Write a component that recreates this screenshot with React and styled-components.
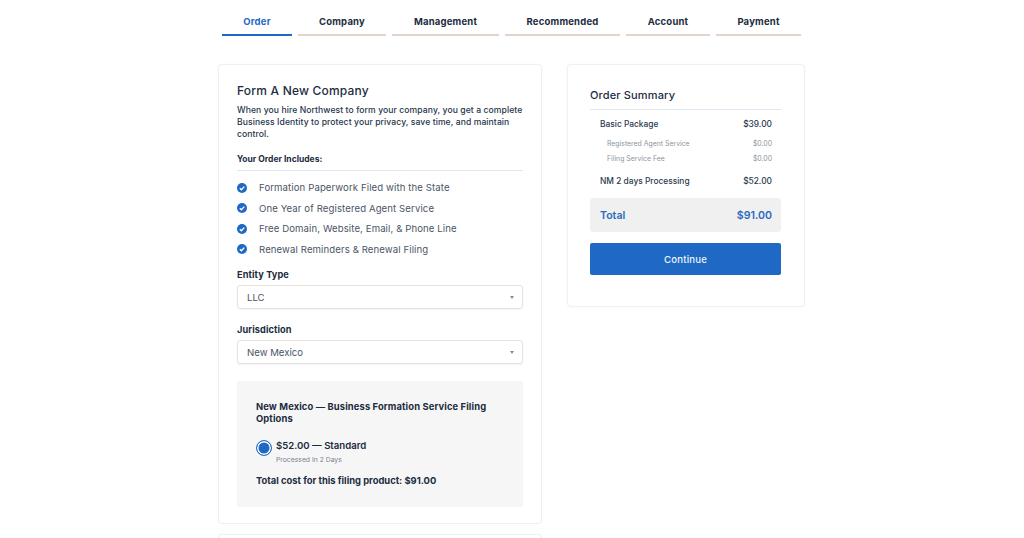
import React from "react";
import styled, { createGlobalStyle } from "styled-components";

const Global = createGlobalStyle`
  html, body {
    margin: 0;
    height: 538px;
    overflow: hidden;
    background: #fff;
    font-family: Inter, "Liberation Sans", sans-serif;
    color: #1c2c40;
  }
`;

const steps = [
  { label: "Order", width: 70, active: true },
  { label: "Company", width: 88 },
  { label: "Management", width: 107 },
  { label: "Recommended", width: 115 },
  { label: "Account", width: 84 },
  { label: "Payment", width: 85 },
];

const includes = [
  "Formation Paperwork Filed with the State",
  "One Year of Registered Agent Service",
  "Free Domain, Website, Email, & Phone Line",
  "Renewal Reminders & Renewal Filing",
];

const Check = () => (
  <CheckIcon viewBox="0 0 10 10">
    <circle cx="5" cy="5" r="5" fill="#1f69c4" />
    <path d="M2.8 5.2 4.4 6.8 7.3 3.6" fill="none" stroke="#fff" strokeWidth="1.3" />
  </CheckIcon>
);

const App = () => {
  return (
    <Page>
      <Global />
      <Steps>
        {steps.map((s) => (
          <Step key={s.label} $width={s.width} $active={s.active}>
            {s.label}
          </Step>
        ))}
      </Steps>
      <Columns>
        <LeftColumn>
          <FormCard>
            <Title>Form A New Company</Title>
            <Intro>
              When you hire Northwest to form your company, you get a complete Business Identity to
              protect your privacy, save time, and maintain control.
            </Intro>
            <IncludesHeading>Your Order Includes:</IncludesHeading>
            <IncludesList>
              {includes.map((item) => (
                <IncludesItem key={item}>
                  <Check />
                  {item}
                </IncludesItem>
              ))}
            </IncludesList>
            <FieldLabel>Entity Type</FieldLabel>
            <Select>
              LLC
              <Caret />
            </Select>
            <FieldLabel $second>Jurisdiction</FieldLabel>
            <Select>
              New Mexico
              <Caret />
            </Select>
            <OptionsPanel>
              <OptionsTitle>New Mexico — Business Formation Service Filing Options</OptionsTitle>
              <RadioRow>
                <Radio />
                <div>
                  <RadioLabel>$52.00 — Standard</RadioLabel>
                  <RadioHint>Processed In 2 Days</RadioHint>
                </div>
              </RadioRow>
              <TotalCost>Total cost for this filing product: $91.00</TotalCost>
            </OptionsPanel>
          </FormCard>
          <NextCard />
        </LeftColumn>
        <SummaryCard>
          <SummaryTitle>Order Summary</SummaryTitle>
          <SummaryRows>
            <MainRow>
              <span>Basic Package</span>
              <span>$39.00</span>
            </MainRow>
            <SubRow $top={9}>
              <span>Registered Agent Service</span>
              <span>$0.00</span>
            </SubRow>
            <SubRow $top={6}>
              <span>Filing Service Fee</span>
              <span>$0.00</span>
            </SubRow>
            <MainRow $top={12}>
              <span>NM 2 days Processing</span>
              <span>$52.00</span>
            </MainRow>
          </SummaryRows>
          <TotalBar>
            <span>Total</span>
            <span>$91.00</span>
          </TotalBar>
          <ContinueButton>Continue</ContinueButton>
        </SummaryCard>
      </Columns>
    </Page>
  );
};

export default App;

const Page = styled.div`
  width: 1024px;
  height: 538px;
  overflow: hidden;
  padding: 15px 0 0 218px;
  box-sizing: border-box;
`;

const Steps = styled.div`
  display: flex;
  gap: 6px;
  margin-left: 4px;
`;

const Step = styled.div`
  width: ${(p) => p.$width}px;
  height: 19px;
  text-align: center;
  font-size: 9.5px;
  line-height: 13px;
  font-weight: 700;
  letter-spacing: 0.2px;
  color: ${(p) => (p.$active ? "#1f69c4" : "#1c2c40")};
  border-bottom: 2px solid ${(p) => (p.$active ? "#1f69c4" : "#e0d4cc")};
`;

const Columns = styled.div`
  display: flex;
  align-items: flex-start;
  gap: 25px;
  margin-top: 28px;
`;

const LeftColumn = styled.div`
  display: flex;
  flex-direction: column;
  gap: 10px;
  width: 324px;
`;

const Card = styled.div`
  box-sizing: border-box;
  background: #fff;
  border: 1px solid #f0f0f0;
  border-radius: 4px;
  box-shadow: 0 0 3px rgba(0, 0, 0, 0.03);
`;

const FormCard = styled(Card)`
  height: 460px;
  padding: 18px 18px 0;
`;

const NextCard = styled(Card)`
  height: 40px;
`;

const Title = styled.h2`
  margin: 0;
  font-size: 12px;
  line-height: 16px;
  font-weight: 500;
  letter-spacing: 0.2px;
  color: #1c2c40;
`;

const Intro = styled.p`
  margin: 5px 0 0;
  font-size: 8.6px;
  line-height: 12px;
  font-weight: 500;
  letter-spacing: 0.08px;
  color: #25354a;
`;

const IncludesHeading = styled.div`
  margin-top: 13px;
  padding-bottom: 5px;
  border-bottom: 1px solid #dbe8f4;
  font-size: 8.5px;
  line-height: 12px;
  font-weight: 700;
`;

const IncludesList = styled.ul`
  list-style: none;
  margin: 6.5px 0 0;
  padding: 0;
`;

const IncludesItem = styled.li`
  display: flex;
  align-items: center;
  gap: 12px;
  height: 20.5px;
  font-size: 9.6px;
  letter-spacing: 0.1px;
  color: #4a5566;
`;

const CheckIcon = styled.svg`
  width: 10px;
  height: 10px;
  flex: none;
`;

const FieldLabel = styled.div`
  margin-top: ${(p) => (p.$second ? 15 : 9.5)}px;
  font-size: 9.2px;
  line-height: 12px;
  font-weight: 700;
  letter-spacing: 0.1px;
`;

const Select = styled.div`
  position: relative;
  box-sizing: border-box;
  display: flex;
  align-items: center;
  height: 24px;
  margin-top: 4px;
  padding-left: 9px;
  border: 1px solid #e6e2dc;
  border-radius: 3px;
  box-shadow: 0 1px 2px rgba(0, 0, 0, 0.05);
  font-size: 9.6px;
  color: #4a5566;
`;

const Caret = styled.i`
  position: absolute;
  right: 8px;
  top: 10px;
  border-left: 2.5px solid transparent;
  border-right: 2.5px solid transparent;
  border-top: 3px solid #858c96;
`;

const OptionsPanel = styled.div`
  box-sizing: border-box;
  height: 126px;
  margin-top: 17px;
  padding: 20px 19px 0;
  background: #f6f6f6;
  border-radius: 3px;
`;

const OptionsTitle = styled.div`
  font-size: 9.4px;
  line-height: 12px;
  font-weight: 700;
  letter-spacing: 0.12px;
`;

const RadioRow = styled.div`
  display: flex;
  gap: 4px;
  margin-top: 14px;
`;

const Radio = styled.span`
  box-sizing: border-box;
  width: 16px;
  height: 16px;
  margin-top: 1px;
  flex: none;
  border: 1.5px solid #2f74c9;
  border-radius: 50%;
  background: #1f69c4;
  box-shadow: inset 0 0 0 1.5px #fff;
`;

const RadioLabel = styled.div`
  font-size: 9.6px;
  line-height: 14px;
  font-weight: 600;
`;

const RadioHint = styled.div`
  margin-top: 2px;
  font-size: 6.8px;
  line-height: 10px;
  color: #7a8390;
`;

const TotalCost = styled.div`
  margin-top: 10px;
  font-size: 9.4px;
  line-height: 12px;
  font-weight: 700;
`;

const SummaryCard = styled(Card)`
  width: 238px;
  height: 243px;
  padding: 22px 23px 0 22px;
`;

const SummaryTitle = styled.div`
  padding: 1px 0 6px;
  border-bottom: 1px solid #dbe8f4;
  font-size: 11px;
  line-height: 15px;
  font-weight: 500;
  letter-spacing: 0.15px;
`;

const SummaryRows = styled.div`
  padding: 8px 9px 0 10px;
`;

const Row = styled.div`
  display: flex;
  justify-content: space-between;
  margin-top: ${(p) => p.$top || 0}px;
`;

const MainRow = styled(Row)`
  font-size: 8.4px;
  line-height: 12px;
  font-weight: 500;
  color: #2a3a4e;
`;

const SubRow = styled(Row)`
  padding-left: 7px;
  font-size: 6.9px;
  line-height: 9px;
  color: #8d95a0;
`;

const TotalBar = styled.div`
  display: flex;
  justify-content: space-between;
  align-items: center;
  box-sizing: border-box;
  height: 34px;
  margin-top: 11px;
  padding: 0 9px 0 10px;
  background: #f0f0f0;
  border-radius: 3px;
  font-size: 10.6px;
  font-weight: 600;
  color: #2b6cbd;
`;

const ContinueButton = styled.button`
  display: block;
  width: 100%;
  height: 32px;
  margin-top: 11px;
  border: 0;
  border-radius: 2px;
  background: #1f69c4;
  color: #eef4fb;
  font-family: inherit;
  font-size: 9.6px;
  font-weight: 500;
  letter-spacing: 0.2px;
`;
